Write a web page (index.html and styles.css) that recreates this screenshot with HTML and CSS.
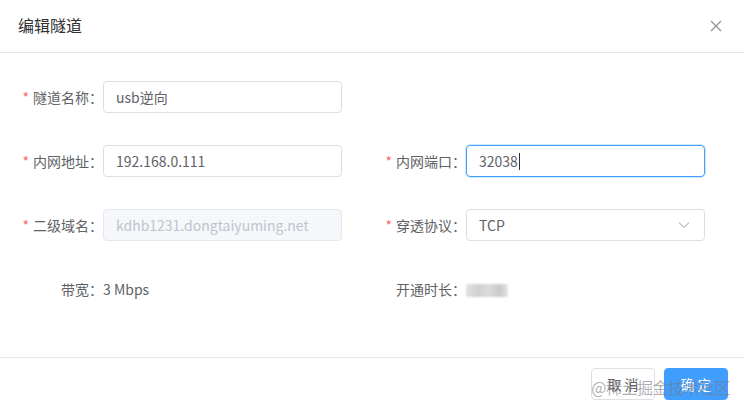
FILE: index.html
```html
<!DOCTYPE html>
<html lang="zh-CN">
<head>
<meta charset="utf-8">
<link rel="stylesheet" href="styles.css">
</head>
<body>
<div class="dialog">
  <div class="header">
    <span class="title">编辑隧道</span>
    <svg class="close" width="12" height="12" viewBox="0 0 12 12"><path d="M1 1L11 11M11 1L1 11" stroke="#909399" stroke-width="1.3" fill="none"/></svg>
  </div>
  <div class="body">
    <div class="grid">
      <div class="item">
        <label class="label req">隧道名称：</label>
        <div class="input"><span>usb逆向</span></div>
      </div>
      <div class="item empty"></div>

      <div class="item">
        <label class="label req">内网地址：</label>
        <div class="input"><span>192.168.0.111</span></div>
      </div>
      <div class="item">
        <label class="label req">内网端口：</label>
        <div class="input focus"><span>32038</span><i class="caret"></i></div>
      </div>

      <div class="item">
        <label class="label req">二级域名：</label>
        <div class="input disabled"><span>kdhb1231.dongtaiyuming.net</span></div>
      </div>
      <div class="item">
        <label class="label req">穿透协议：</label>
        <div class="input select"><span>TCP</span>
          <svg class="arrow" width="12" height="8" viewBox="0 0 12 8"><path d="M1 1.5L6 6.5L11 1.5" stroke="#C0C4CC" stroke-width="1.1" fill="none"/></svg>
        </div>
      </div>

      <div class="item">
        <label class="label">带宽：</label>
        <div class="text">3 Mbps</div>
      </div>
      <div class="item">
        <label class="label">开通时长：</label>
        <div class="text"><span class="blur"></span></div>
      </div>
    </div>
  </div>
  <div class="footer">
    <button class="btn">取 消</button>
    <button class="btn primary">确 定</button>
    <span class="watermark">@稀土掘金技术社区</span>
  </div>
</div>
</body>
</html>
```
FILE: styles.css
```css
* { box-sizing: border-box; }
html, body { margin: 0; padding: 0; background: #fff; }
body {
  font-family: "Noto Sans CJK SC", "Noto Sans", sans-serif;
  font-size: 14px;
  color: #606266;
  width: 744px;
  height: 409px;
  overflow: hidden;
}
.dialog { width: 744px; height: 409px; position: relative; }
.header {
  height: 53px;
  border-bottom: 1px solid #e8e8e8;
  display: flex;
  align-items: center;
  justify-content: space-between;
  padding: 0 22px 0 18px;
}
.title { font-size: 16px; color: #303133; line-height: 20px; margin-top: -2px; }
.close { display: block; margin-top: -1px; }
.body { height: 304px; padding: 28px 0 0 20px; }
.grid {
  display: grid;
  grid-template-columns: 322px 322px;
  column-gap: 41px;
  row-gap: 32px;
}
.item { display: flex; align-items: center; height: 32px; }
.label {
  width: 83px;
  text-align: right;
  color: #606266;
  white-space: nowrap;
  line-height: 32px;
}
.label.req::before { content: "*"; color: #F56C6C; margin-right: 4px; }
.input {
  width: 239px;
  height: 32px;
  border: 1px solid #DCDFE6;
  border-radius: 4px;
  padding: 0 12px;
  display: flex;
  align-items: center;
  color: #606266;
  position: relative;
}
.input.focus { border-color: #409EFF; box-shadow: 0 0 0 1px rgba(64,158,255,0.25); }
.caret { display: inline-block; width: 1px; height: 17px; background: #303133; margin-left: 1px; }
.input.disabled { background: #F5F7FA; border-color: #E4E7ED; color: #C0C4CC; }
.input.select { justify-content: space-between; padding-right: 14px; }
.arrow { display: block; }
.text { color: #606266; line-height: 32px; }
.blur {
  display: inline-block;
  width: 42px;
  height: 13px;
  vertical-align: middle;
  background: linear-gradient(90deg, #e2e2e2 0%, #d0d0d0 30%, #dcdcdc 55%, #c8c8c8 80%, #e6e6e6 100%);
  filter: blur(1px);
  margin-top: -2px;
}
.footer {
  border-top: 1px solid #e8e8e8;
  height: 52px;
  display: flex;
  justify-content: flex-end;
  align-items: flex-start;
  padding: 10px 16px 0 0;
  gap: 9px;
  position: relative;
}
.btn {
  font-family: inherit;
  font-size: 14px;
  width: 64px;
  height: 32px;
  border-radius: 4px;
  border: 1px solid #DCDFE6;
  background: #fff;
  color: #606266;
  padding: 0;
  line-height: 30px;
}
.btn.primary { background: #409EFF; border-color: #409EFF; color: #fff; }
.watermark {
  position: absolute;
  right: 14px;
  top: 17px;
  font-size: 16px;
  color: rgba(120,120,130,0.6);
  letter-spacing: -0.5px;
  pointer-events: none;
}
```
